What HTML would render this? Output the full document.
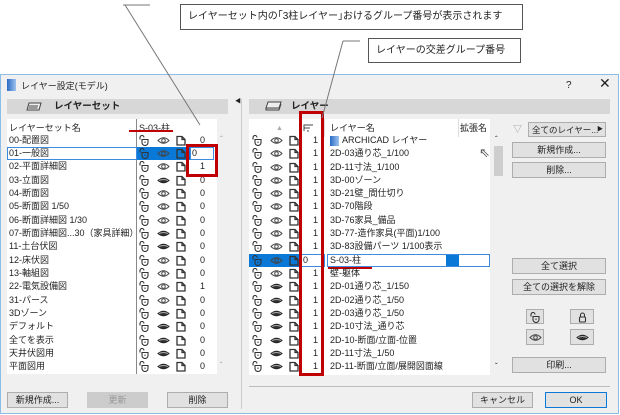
<!DOCTYPE html>
<html><head><meta charset="utf-8"><style>
*{margin:0;padding:0;box-sizing:border-box}
body{width:620px;height:415px;background:#fff;position:relative;overflow:hidden;font-family:"Liberation Sans","Noto Sans CJK JP",sans-serif;font-size:9px;color:#222}
.a{position:absolute}
.dlg{left:0;top:74px;width:619px;height:340px;background:#f0f0f0;border:1px solid #8cbde6}
.bar{background:#d7d7d7;height:15px;font-weight:bold;font-size:9.5px;line-height:15px}
.list{background:#fff}
.t{position:absolute;white-space:nowrap;line-height:12px}
.btn{position:absolute;background:#e1e1e1;border:1px solid #adadad;text-align:center;line-height:14px;font-size:9px;white-space:nowrap;overflow:hidden}
.sel{background:#0a78d7}
.red{position:absolute;border:3px solid #c00000}
svg.i{position:absolute;width:13px;height:11px}
.cb{position:absolute;background:#fff;border:1px solid #555;font-size:10px;line-height:23px;padding-left:7px;white-space:nowrap}
</style></head><body>
<svg width="0" height="0" style="position:absolute">
<defs>
<symbol id="lk" viewBox="0 0 13 11"><path d="M2 4.5V2.5a2 2 0 0 1 4 0" fill="none" stroke="#333" stroke-width="1.1"/><path d="M4 4.5h6v3a3 3 0 0 1-6 0z" fill="none" stroke="#333" stroke-width="1.1"/><path d="M7 6.5v1.5" stroke="#333"/></symbol>
<symbol id="lc" viewBox="0 0 13 11"><path d="M4.5 5V3a2 2 0 0 1 4 0v2" fill="none" stroke="#333" stroke-width="1.1"/><rect x="3.5" y="5" width="6" height="5" rx="1" fill="none" stroke="#333" stroke-width="1.1"/></symbol>
<symbol id="eo" viewBox="0 0 13 11"><path d="M1 5.5Q6.5 0 12 5.5Q6.5 11 1 5.5z" fill="none" stroke="#444" stroke-width="1"/><circle cx="6.5" cy="5.5" r="1.8" fill="none" stroke="#444"/></symbol>
<symbol id="ec" viewBox="0 0 13 11"><path d="M1 5.5Q6.5 1 12 5.5Q6.5 10 1 5.5z" fill="#333" stroke="#222"/><path d="M2 5.5Q6.5 3.5 11 5.5" stroke="#aaa" fill="none"/></symbol>
<symbol id="fd" viewBox="0 0 13 11"><path d="M2 1.5h5l3 3v5.5H2zM7 1.5v3h3" fill="none" stroke="#333" stroke-width="1.3"/></symbol>
</defs></svg>

<!-- callouts -->
<div class="cb a" style="left:180px;top:4px;width:343px;height:26px">レイヤーセット内の｢3柱レイヤー｣おけるグループ番号が表示されます</div>
<div class="cb a" style="left:368px;top:38px;width:153px;height:25px">レイヤーの交差グループ番号</div>

<div class="a dlg"></div>
<!-- title -->
<div class="a" style="left:7px;top:79px;width:9px;height:12px;background:linear-gradient(90deg,#2a6bc4,#9ec3ee)"></div>
<div class="t" style="left:21px;top:80px;font-size:9px">レイヤー設定(モデル)</div>
<div class="t" style="left:566px;top:80px;font-size:10px">?</div>
<div class="t" style="left:599px;top:77px;font-size:14px">✕</div>

<!-- left panel -->
<div class="a bar" style="left:7px;top:99px;width:221px"><svg style="position:absolute;left:18px;top:2px" width="18" height="11"><path d="M4 2h12l-2 7H2z" fill="#eee" stroke="#444"/><path d="M4 5h9M3.5 7h9" stroke="#444"/></svg><span style="position:absolute;left:47px">レイヤーセット</span></div>
<div class="a list" style="left:7px;top:119px;width:210px;height:255px"></div>
<div class="a" style="left:136px;top:119px;width:1px;height:255px;background:#888"></div>
<div class="t" style="left:9px;top:122px">レイヤーセット名</div>
<div class="t" style="left:139px;top:122px">S-03-柱</div>
<div class="a" style="left:129px;top:130px;width:44px;height:2px;background:#c00000"></div>
<div class="t" style="left:220px;top:134px;color:#999;font-size:8px">ˆ</div>
<div class="t" style="left:220px;top:360px;color:#999;font-size:8px">ˇ</div>

<div class="a sel" style="left:137px;top:147px;width:53px;height:13px"></div>
<div class="a" style="left:7px;top:147px;width:130px;height:13px;border:1px solid #3c8be0"></div>
<div class="a" style="left:190px;top:147px;width:24px;height:13px;background:#fff;border:1px solid #3c8be0"></div>

<div class="t" style="left:9px;top:134px">00-配置図</div>
<div class="t" style="left:9px;top:147px">01-一般図</div>
<div class="t" style="left:9px;top:160px">02-平面詳細図</div>
<div class="t" style="left:9px;top:174px">03-立面図</div>
<div class="t" style="left:9px;top:187px">04-断面図</div>
<div class="t" style="left:9px;top:200px">05-断面図 1/50</div>
<div class="t" style="left:9px;top:214px">06-断面詳細図 1/30</div>
<div class="t" style="left:9px;top:227px">07-断面詳細図...30（家具詳細）</div>
<div class="t" style="left:9px;top:240px">11-土台伏図</div>
<div class="t" style="left:9px;top:254px">12-床伏図</div>
<div class="t" style="left:9px;top:267px">13-軸組図</div>
<div class="t" style="left:9px;top:280px">22-電気設備図</div>
<div class="t" style="left:9px;top:294px">31-パース</div>
<div class="t" style="left:9px;top:307px">3Dゾーン</div>
<div class="t" style="left:9px;top:320px">デフォルト</div>
<div class="t" style="left:9px;top:334px">全てを表示</div>
<div class="t" style="left:9px;top:347px">天井伏図用</div>
<div class="t" style="left:9px;top:360px">平面図用</div>

<!-- left icons -->
<svg class="i" style="left:138px;top:135px"><use href="#lk"/></svg><svg class="i" style="left:157px;top:135px"><use href="#eo"/></svg><svg class="i" style="left:175px;top:135px"><use href="#fd"/></svg><div class="t" style="left:200px;top:134px">0</div>
<svg class="i" style="left:138px;top:148px"><use href="#lk"/></svg><svg class="i" style="left:157px;top:148px"><use href="#eo"/></svg><svg class="i" style="left:175px;top:148px"><use href="#fd"/></svg><div class="t" style="left:192px;top:147px">0</div>
<svg class="i" style="left:138px;top:161px"><use href="#lk"/></svg><svg class="i" style="left:157px;top:161px"><use href="#eo"/></svg><svg class="i" style="left:175px;top:161px"><use href="#fd"/></svg><div class="t" style="left:200px;top:160px">1</div>
<svg class="i" style="left:138px;top:175px"><use href="#lk"/></svg><svg class="i" style="left:157px;top:175px"><use href="#ec"/></svg><svg class="i" style="left:175px;top:175px"><use href="#fd"/></svg><div class="t" style="left:200px;top:174px">0</div>
<svg class="i" style="left:138px;top:188px"><use href="#lk"/></svg><svg class="i" style="left:157px;top:188px"><use href="#eo"/></svg><svg class="i" style="left:175px;top:188px"><use href="#fd"/></svg><div class="t" style="left:200px;top:187px">0</div>
<svg class="i" style="left:138px;top:201px"><use href="#lk"/></svg><svg class="i" style="left:157px;top:201px"><use href="#eo"/></svg><svg class="i" style="left:175px;top:201px"><use href="#fd"/></svg><div class="t" style="left:200px;top:200px">0</div>
<svg class="i" style="left:138px;top:215px"><use href="#lk"/></svg><svg class="i" style="left:157px;top:215px"><use href="#eo"/></svg><svg class="i" style="left:175px;top:215px"><use href="#fd"/></svg><div class="t" style="left:200px;top:214px">0</div>
<svg class="i" style="left:138px;top:228px"><use href="#lk"/></svg><svg class="i" style="left:157px;top:228px"><use href="#ec"/></svg><svg class="i" style="left:175px;top:228px"><use href="#fd"/></svg><div class="t" style="left:200px;top:227px">0</div>
<svg class="i" style="left:138px;top:241px"><use href="#lk"/></svg><svg class="i" style="left:157px;top:241px"><use href="#ec"/></svg><svg class="i" style="left:175px;top:241px"><use href="#fd"/></svg><div class="t" style="left:200px;top:240px">0</div>
<svg class="i" style="left:138px;top:255px"><use href="#lk"/></svg><svg class="i" style="left:157px;top:255px"><use href="#eo"/></svg><svg class="i" style="left:175px;top:255px"><use href="#fd"/></svg><div class="t" style="left:200px;top:254px">0</div>
<svg class="i" style="left:138px;top:268px"><use href="#lk"/></svg><svg class="i" style="left:157px;top:268px"><use href="#eo"/></svg><svg class="i" style="left:175px;top:268px"><use href="#fd"/></svg><div class="t" style="left:200px;top:267px">0</div>
<svg class="i" style="left:138px;top:281px"><use href="#lk"/></svg><svg class="i" style="left:157px;top:281px"><use href="#eo"/></svg><svg class="i" style="left:175px;top:281px"><use href="#fd"/></svg><div class="t" style="left:200px;top:280px">1</div>
<svg class="i" style="left:138px;top:295px"><use href="#lk"/></svg><svg class="i" style="left:157px;top:295px"><use href="#eo"/></svg><svg class="i" style="left:175px;top:295px"><use href="#fd"/></svg><div class="t" style="left:200px;top:294px">0</div>
<svg class="i" style="left:138px;top:308px"><use href="#lk"/></svg><svg class="i" style="left:157px;top:308px"><use href="#ec"/></svg><svg class="i" style="left:175px;top:308px"><use href="#fd"/></svg><div class="t" style="left:200px;top:307px">0</div>
<svg class="i" style="left:138px;top:321px"><use href="#lk"/></svg><svg class="i" style="left:157px;top:321px"><use href="#ec"/></svg><svg class="i" style="left:175px;top:321px"><use href="#fd"/></svg><div class="t" style="left:200px;top:320px">0</div>
<svg class="i" style="left:138px;top:335px"><use href="#lk"/></svg><svg class="i" style="left:157px;top:335px"><use href="#ec"/></svg><svg class="i" style="left:175px;top:335px"><use href="#fd"/></svg><div class="t" style="left:200px;top:334px">0</div>
<svg class="i" style="left:138px;top:348px"><use href="#lk"/></svg><svg class="i" style="left:157px;top:348px"><use href="#ec"/></svg><svg class="i" style="left:175px;top:348px"><use href="#fd"/></svg><div class="t" style="left:200px;top:347px">0</div>
<svg class="i" style="left:138px;top:361px"><use href="#lk"/></svg><svg class="i" style="left:157px;top:361px"><use href="#ec"/></svg><svg class="i" style="left:175px;top:361px"><use href="#fd"/></svg><div class="t" style="left:200px;top:360px">0</div>

<div class="red" style="left:186px;top:144px;width:32px;height:33px"></div>

<div class="btn" style="left:7px;top:392px;width:61px;height:16px">新規作成...</div>
<div class="btn" style="left:87px;top:392px;width:61px;height:16px;color:#999;background:#ccc;border-color:#ccc">更新</div>
<div class="btn" style="left:167px;top:392px;width:61px;height:16px">削除</div>

<div class="a" style="left:241px;top:99px;width:1px;height:310px;background:#ccc"></div>
<div class="t" style="left:235px;top:96px;font-size:6px">◀</div>

<!-- right panel -->
<div class="a bar" style="left:249px;top:99px;width:361px"><svg style="position:absolute;left:14px;top:2px" width="20" height="11"><path d="M5 1h13l-2 6H3z" fill="#eee" stroke="#444"/><path d="M3 7v2h13l2-6" fill="none" stroke="#444"/></svg><span style="position:absolute;left:42px">レイヤー</span></div>
<div class="a list" style="left:249px;top:119px;width:241px;height:256px"></div>
<div class="a" style="left:324px;top:119px;width:1px;height:18px;background:#ddd"></div>
<div class="a" style="left:458px;top:119px;width:1px;height:18px;background:#ddd"></div>
<div class="t" style="left:276px;top:123px;color:#aaa;font-size:7px">▲</div>
<svg class="a" style="left:303px;top:124px" width="11" height="8"><path d="M1 7V1h9M1 4h6M4 7h2" stroke="#444" fill="none"/></svg>
<div class="t" style="left:330px;top:122px">レイヤー名</div>
<div class="t" style="left:460px;top:122px">拡張名</div>
<div class="t" style="left:479px;top:147px;font-size:13px;color:#555">⇖</div>

<div class="a sel" style="left:249px;top:254px;width:52px;height:13px"></div>
<div class="a" style="left:301px;top:254px;width:24px;height:13px;border:1px solid #3c8be0;background:#fff"></div>
<div class="a" style="left:327px;top:254px;width:163px;height:13px;border:1px solid #3c8be0;background:#fff"></div>
<div class="a" style="left:446px;top:255px;width:13px;height:11px;background:#0a78d7"></div>
<div class="a" style="left:328px;top:267px;width:44px;height:2px;background:#c00000"></div>

<div class="a" style="left:330px;top:136px;width:9px;height:10px;background:linear-gradient(90deg,#2a6bc4,#9ec3ee)"></div>
<div class="t" style="left:342px;top:134px">ARCHICAD レイヤー</div>
<div class="t" style="left:330px;top:147px">2D-03通り芯_1/100</div>
<div class="t" style="left:330px;top:161px">2D-11寸法_1/100</div>
<div class="t" style="left:330px;top:174px">3D-00ゾーン</div>
<div class="t" style="left:330px;top:187px">3D-21壁_間仕切り</div>
<div class="t" style="left:330px;top:200px">3D-70階段</div>
<div class="t" style="left:330px;top:214px">3D-76家具_備品</div>
<div class="t" style="left:330px;top:227px">3D-77-造作家具(平面)1/100</div>
<div class="t" style="left:330px;top:240px">3D-83設備パーツ 1/100表示</div>
<div class="t" style="left:330px;top:254px">S-03-柱</div>
<div class="t" style="left:330px;top:267px">壁-躯体</div>
<div class="t" style="left:330px;top:280px">2D-01通り芯_1/150</div>
<div class="t" style="left:330px;top:294px">2D-02通り芯_1/50</div>
<div class="t" style="left:330px;top:307px">2D-03通り芯_1/50</div>
<div class="t" style="left:330px;top:320px">2D-10寸法_通り芯</div>
<div class="t" style="left:330px;top:334px">2D-10-断面/立面-位置</div>
<div class="t" style="left:330px;top:347px">2D-11寸法_1/50</div>
<div class="t" style="left:330px;top:360px">2D-11-断面/立面/展開図面線</div>

<svg class="i" style="left:251px;top:135px"><use href="#lk"/></svg><svg class="i" style="left:270px;top:135px"><use href="#eo"/></svg><svg class="i" style="left:288px;top:135px"><use href="#fd"/></svg><div class="t" style="left:313px;top:134px">1</div>
<svg class="i" style="left:251px;top:148px"><use href="#lk"/></svg><svg class="i" style="left:270px;top:148px"><use href="#eo"/></svg><svg class="i" style="left:288px;top:148px"><use href="#fd"/></svg><div class="t" style="left:313px;top:147px">1</div>
<svg class="i" style="left:251px;top:162px"><use href="#lk"/></svg><svg class="i" style="left:270px;top:162px"><use href="#eo"/></svg><svg class="i" style="left:288px;top:162px"><use href="#fd"/></svg><div class="t" style="left:313px;top:161px">1</div>
<svg class="i" style="left:251px;top:175px"><use href="#lk"/></svg><svg class="i" style="left:270px;top:175px"><use href="#eo"/></svg><svg class="i" style="left:288px;top:175px"><use href="#fd"/></svg><div class="t" style="left:313px;top:174px">1</div>
<svg class="i" style="left:251px;top:188px"><use href="#lk"/></svg><svg class="i" style="left:270px;top:188px"><use href="#eo"/></svg><svg class="i" style="left:288px;top:188px"><use href="#fd"/></svg><div class="t" style="left:313px;top:187px">1</div>
<svg class="i" style="left:251px;top:201px"><use href="#lk"/></svg><svg class="i" style="left:270px;top:201px"><use href="#eo"/></svg><svg class="i" style="left:288px;top:201px"><use href="#fd"/></svg><div class="t" style="left:313px;top:200px">1</div>
<svg class="i" style="left:251px;top:215px"><use href="#lk"/></svg><svg class="i" style="left:270px;top:215px"><use href="#eo"/></svg><svg class="i" style="left:288px;top:215px"><use href="#fd"/></svg><div class="t" style="left:313px;top:214px">1</div>
<svg class="i" style="left:251px;top:228px"><use href="#lk"/></svg><svg class="i" style="left:270px;top:228px"><use href="#eo"/></svg><svg class="i" style="left:288px;top:228px"><use href="#fd"/></svg><div class="t" style="left:313px;top:227px">1</div>
<svg class="i" style="left:251px;top:241px"><use href="#lk"/></svg><svg class="i" style="left:270px;top:241px"><use href="#eo"/></svg><svg class="i" style="left:288px;top:241px"><use href="#fd"/></svg><div class="t" style="left:313px;top:240px">1</div>
<svg class="i" style="left:251px;top:255px"><use href="#lk"/></svg><svg class="i" style="left:270px;top:255px"><use href="#eo"/></svg><svg class="i" style="left:288px;top:255px"><use href="#fd"/></svg><div class="t" style="left:303px;top:254px">0</div>
<svg class="i" style="left:251px;top:268px"><use href="#lk"/></svg><svg class="i" style="left:270px;top:268px"><use href="#eo"/></svg><svg class="i" style="left:288px;top:268px"><use href="#fd"/></svg><div class="t" style="left:313px;top:267px">1</div>
<svg class="i" style="left:251px;top:281px"><use href="#lk"/></svg><svg class="i" style="left:270px;top:281px"><use href="#ec"/></svg><svg class="i" style="left:288px;top:281px"><use href="#fd"/></svg><div class="t" style="left:313px;top:280px">1</div>
<svg class="i" style="left:251px;top:295px"><use href="#lk"/></svg><svg class="i" style="left:270px;top:295px"><use href="#ec"/></svg><svg class="i" style="left:288px;top:295px"><use href="#fd"/></svg><div class="t" style="left:313px;top:294px">1</div>
<svg class="i" style="left:251px;top:308px"><use href="#lk"/></svg><svg class="i" style="left:270px;top:308px"><use href="#ec"/></svg><svg class="i" style="left:288px;top:308px"><use href="#fd"/></svg><div class="t" style="left:313px;top:307px">1</div>
<svg class="i" style="left:251px;top:321px"><use href="#lk"/></svg><svg class="i" style="left:270px;top:321px"><use href="#ec"/></svg><svg class="i" style="left:288px;top:321px"><use href="#fd"/></svg><div class="t" style="left:313px;top:320px">1</div>
<svg class="i" style="left:251px;top:335px"><use href="#lk"/></svg><svg class="i" style="left:270px;top:335px"><use href="#ec"/></svg><svg class="i" style="left:288px;top:335px"><use href="#fd"/></svg><div class="t" style="left:313px;top:334px">1</div>
<svg class="i" style="left:251px;top:348px"><use href="#lk"/></svg><svg class="i" style="left:270px;top:348px"><use href="#ec"/></svg><svg class="i" style="left:288px;top:348px"><use href="#fd"/></svg><div class="t" style="left:313px;top:347px">1</div>
<svg class="i" style="left:251px;top:361px"><use href="#lk"/></svg><svg class="i" style="left:270px;top:361px"><use href="#ec"/></svg><svg class="i" style="left:288px;top:361px"><use href="#fd"/></svg><div class="t" style="left:313px;top:360px">1</div>

<div class="red" style="left:299px;top:111px;width:25px;height:265px"></div>

<!-- scrollbar -->
<div class="t" style="left:495px;top:134px;font-size:8px">ˆ</div>
<div class="a" style="left:494px;top:146px;width:9px;height:30px;background:#cdcdcd"></div>
<div class="t" style="left:495px;top:361px;font-size:8px">ˇ</div>

<!-- right buttons -->
<div class="t" style="left:513px;top:123px;color:#999">▽</div>
<div class="btn" style="left:528px;top:122px;width:78px;height:15px;text-align:left;padding-left:3px;font-size:8.5px">全てのレイヤー...<span style="position:absolute;right:2px;top:0;font-size:6px">▶</span></div>
<div class="btn" style="left:512px;top:142px;width:94px;height:16px">新規作成...</div>
<div class="btn" style="left:512px;top:162px;width:94px;height:16px">削除...</div>
<div class="btn" style="left:512px;top:258px;width:94px;height:16px">全て選択</div>
<div class="btn" style="left:512px;top:279px;width:94px;height:16px">全ての選択を解除</div>
<div class="btn" style="left:526px;top:309px;width:18px;height:15px"><svg class="i" style="left:2px;top:2px"><use href="#lk"/></svg></div>
<div class="btn" style="left:570px;top:309px;width:24px;height:15px"><svg class="i" style="left:5px;top:2px"><use href="#lc"/></svg></div>
<div class="btn" style="left:526px;top:329px;width:18px;height:16px"><svg class="i" style="left:2px;top:2px"><use href="#eo"/></svg></div>
<div class="btn" style="left:570px;top:329px;width:24px;height:16px"><svg class="i" style="left:5px;top:2px"><use href="#ec"/></svg></div>
<div class="btn" style="left:512px;top:357px;width:94px;height:16px">印刷...</div>

<div class="a" style="left:249px;top:386px;width:361px;height:1px;background:#bbb"></div>
<div class="btn" style="left:472px;top:392px;width:61px;height:16px">キャンセル</div>
<div class="btn" style="left:545px;top:392px;width:62px;height:16px;border:1px solid #0a78d7">OK</div>

<!-- leader lines -->
<svg class="a" style="left:0;top:0" width="620" height="200">
<path d="M123 5H150M125 5L200 125" stroke="#777" stroke-width="1" fill="none"/>
<path d="M343 41H360M343 41L322 118" stroke="#777" stroke-width="1" fill="none"/>
</svg>
</body></html>
